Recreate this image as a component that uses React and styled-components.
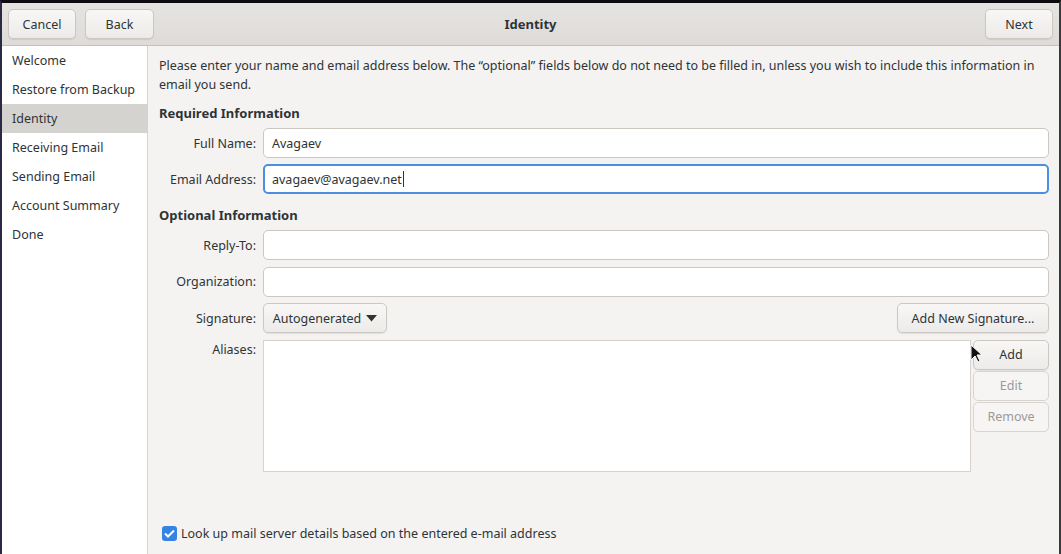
import React from 'react';
import styled, { createGlobalStyle } from 'styled-components';

const Global = createGlobalStyle`
  html, body { margin: 0; padding: 0; background: #000; }
  body { font-family: "Noto Sans", "Open Sans", sans-serif; font-size: 12.5px; color: #2e3436; }
  * { box-sizing: border-box; }
`;

const Window = styled.div`
  position: relative;
  width: 1061px;
  height: 554px;
  overflow: hidden;
  border-top: 3px solid #0c0c10;
  border-left: 2px solid #2b2a45;
  border-right: 2px solid #3a3a3e;
  background: #f4f3f2;
  display: flex;
  flex-direction: column;
`;

const HeaderBar = styled.div`
  height: 43px;
  flex: none;
  display: flex;
  align-items: center;
  padding: 0 6px;
  gap: 9px;
  background: linear-gradient(#e6e4e1, #dedbd8);
  border-bottom: 1px solid #c4c0bb;
`;

const Title = styled.div`
  flex: 1;
  text-align: center;
  font-weight: 700;
  font-size: 13px;
  padding-right: 78px;
`;

const Button = styled.button`
  font-family: inherit;
  font-size: 12.5px;
  white-space: nowrap;
  color: ${p => (p.disabled ? '#9a9b97' : '#2e3436')};
  height: 30px;
  width: ${p => (p.w ? p.w + 'px' : 'auto')};
  padding: 0 8px;
  border: 1px solid ${p => (p.disabled ? '#d8d5d1' : '#cdc7c2')};
  border-radius: 5px;
  background: ${p => (p.disabled ? '#f6f5f4' : 'linear-gradient(#f8f7f6, #edebe9)')};
  box-shadow: ${p => (p.disabled ? 'none' : '0 1px 1px rgba(0,0,0,0.08)')};
  display: inline-flex;
  align-items: center;
  justify-content: center;
  gap: 5px;
  flex: none;
`;

const Main = styled.div`
  flex: 1;
  display: flex;
  min-height: 0;
`;

const Sidebar = styled.div`
  width: 146px;
  flex: none;
  background: #fff;
  border-right: 1px solid #d6d3cf;
`;

const SideItem = styled.div`
  height: 29px;
  line-height: 29px;
  padding-left: 10px;
  white-space: nowrap;
  background: ${p => (p.active ? '#d5d3d0' : 'transparent')};
`;

const Content = styled.div`
  flex: 1;
  padding: 11px 10px 0 11px;
  display: flex;
  flex-direction: column;
`;

const Intro = styled.p`
  margin: 0;
  line-height: 18.5px;
`;

const Heading = styled.div`
  font-weight: 700;
  font-size: 13px;
  height: 18px;
  line-height: 18px;
  margin: ${p => p.mt}px 0 6px;
`;

const Form = styled.div`
  display: grid;
  grid-template-columns: 97px 1fr;
  column-gap: 7px;
  row-gap: ${p => p.gap || 6}px;
  align-items: center;
`;

const Label = styled.div`
  text-align: right;
  white-space: nowrap;
  align-self: ${p => (p.top ? 'start' : 'center')};
  padding-top: ${p => (p.top ? '1px' : '0')};
`;

const Input = styled.div`
  height: 30px;
  background: #fff;
  border: ${p => (p.focus ? '2px solid #4a8fe0' : '1px solid #cdc7c2')};
  border-radius: 5px;
  display: flex;
  align-items: center;
  padding-left: ${p => (p.focus ? '7px' : '8px')};
`;

const Caret = styled.span`
  display: inline-block;
  width: 1px;
  height: 16px;
  background: #2e3436;
  margin-left: 1px;
`;

const SigRow = styled.div`
  display: flex;
  justify-content: space-between;
  align-items: center;
`;

const AliasRow = styled.div`
  display: flex;
  gap: 2px;
  align-items: flex-start;
`;

const AliasList = styled.div`
  flex: 1;
  height: 132px;
  background: #fff;
  border: 1px solid #d6d3cf;
`;

const AliasButtons = styled.div`
  width: 76px;
  display: flex;
  flex-direction: column;
  gap: 1px;
`;

const CheckRow = styled.label`
  margin-top: auto;
  margin-bottom: 12px;
  margin-left: 3px;
  display: flex;
  align-items: center;
  gap: 4px;
  height: 18px;
`;

const CheckBox = styled.span`
  width: 15px;
  height: 15px;
  border-radius: 3px;
  background: #3584e4;
  display: inline-flex;
  align-items: center;
  justify-content: center;
`;

const Cursor = styled.svg`
  position: absolute;
  left: 968px;
  top: 341px;
`;

const steps = ['Welcome', 'Restore from Backup', 'Identity', 'Receiving Email', 'Sending Email', 'Account Summary', 'Done'];

export default function App() {
  return (
    <>
      <Global />
      <Window>
        <HeaderBar>
          <Button w={68}>Cancel</Button>
          <Button w={69}>Back</Button>
          <Title>Identity</Title>
          <Button w={68}>Next</Button>
        </HeaderBar>
        <Main>
          <Sidebar>
            {steps.map(s => (
              <SideItem key={s} active={s === 'Identity'}>{s}</SideItem>
            ))}
          </Sidebar>
          <Content>
            <Intro>
              Please enter your name and email address below. The “optional” fields below do not need to be filled in, unless you wish to include this information in email you send.
            </Intro>
            <Heading mt={10}>Required Information</Heading>
            <Form>
              <Label>Full Name:</Label>
              <Input>Avagaev</Input>
              <Label>Email Address:</Label>
              <Input focus>avagaev@avagaev.net<Caret /></Input>
            </Form>
            <Heading mt={12}>Optional Information</Heading>
            <Form gap={6.5}>
              <Label>Reply-To:</Label>
              <Input />
              <Label>Organization:</Label>
              <Input />
              <Label>Signature:</Label>
              <SigRow>
                <Button w={124}>
                  Autogenerated
                  <svg width="11" height="7" viewBox="0 0 11 7"><path d="M0 0h11L5.5 6.5z" fill="#2e3436" /></svg>
                </Button>
                <Button w={152}>Add New Signature...</Button>
              </SigRow>
              <Label top>Aliases:</Label>
              <AliasRow>
                <AliasList />
                <AliasButtons>
                  <Button w={76}>Add</Button>
                  <Button w={76} disabled>Edit</Button>
                  <Button w={76} disabled>Remove</Button>
                </AliasButtons>
              </AliasRow>
            </Form>
            <CheckRow>
              <CheckBox>
                <svg width="11" height="9" viewBox="0 0 11 9"><path d="M1 4.5l3 3L10 1.5" stroke="#fff" strokeWidth="2" fill="none" /></svg>
              </CheckBox>
              Look up mail server details based on the entered e-mail address
            </CheckRow>
          </Content>
        </Main>
        <Cursor width="12" height="19" viewBox="0 0 12 19">
          <path d="M1 1v15l4-4 3 6 2-1-3-6h5z" fill="#111" stroke="#fff" strokeWidth="1" />
        </Cursor>
      </Window>
    </>
  );
}
